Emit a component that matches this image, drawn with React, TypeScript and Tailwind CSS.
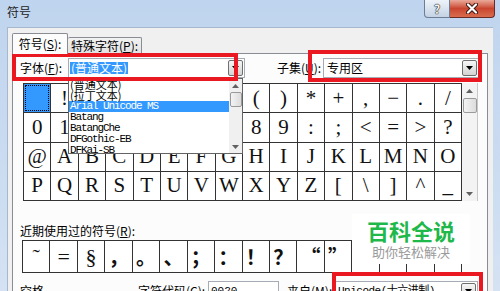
import React from "react";

const row1 = [" ", "!", "", "", "", "", "", "", "(", ")", "*", "+", ",", "−", ".", "/"];
const row2 = ["0", "1", "", "", "", "", "", "", "8", "9", ":", ";", "<", "=", ">", "?"];
const row3 = "@ABCDEFGHIJKLMNO".split("");
const row4 = "PQRSTUVWXYZ[\\]^_".split("");
const rows = [row1, row2, row3, row4];

const recent = ["˜", "=", "§", "，", "。", "、", "；", "：", "！", "？", "“", "”", "", "", "", ""];

function DropBtn() {
  return (
    <div className="ml-auto mr-[1px] flex h-[16px] w-[15px] items-center justify-center rounded-[2px] border border-[#6f6f6f] bg-gradient-to-b from-[#f6f6f6] to-[#d4d4d4]">
      <svg width="7" height="4" viewBox="0 0 7 4">
        <path d="M0 0H7L3.5 4Z" fill="#000" />
      </svg>
    </div>
  );
}

function UpArrow() {
  return (
    <svg width="7" height="4" viewBox="0 0 7 4">
      <path d="M0 4H7L3.5 0Z" fill="#606060" />
    </svg>
  );
}
function DownArrow() {
  return (
    <svg width="7" height="4" viewBox="0 0 7 4">
      <path d="M0 0H7L3.5 4Z" fill="#606060" />
    </svg>
  );
}

function Label({ text, k }: { text: string; k: string }) {
  return (
    <span className="whitespace-nowrap">
      {text}(<span className="underline">{k}</span>):
    </span>
  );
}

export default function App() {
  return (
    <div className="relative h-[291px] w-[500px] overflow-hidden bg-gradient-to-b from-[#bfd4ee] to-[#d4e2f3] font-['Noto_Sans_CJK_SC',sans-serif] text-[12px] leading-[16px] text-black">
      {/* title bar */}
      <div className="flex h-[27px] items-start">
        <div className="pl-[7px] pt-[4px] text-[12px] leading-[16px] text-[#1e1e1e]">符号</div>
        <div className="ml-auto mr-[5px] flex">
          <div className="flex h-[18px] w-[26px] items-center justify-center rounded-bl-[4px] border border-t-0 border-[#6d7d93] bg-gradient-to-b from-[#eef3f9] via-[#d9e3ef] to-[#c3d2e4] text-[12px] font-bold leading-none text-[#f5f5f5] [text-shadow:0_0_1px_#222,0_0_1px_#222,0_0_1px_#222]">
            ?
          </div>
          <div className="flex h-[18px] w-[45px] items-center justify-center rounded-br-[4px] border border-l-0 border-t-0 border-[#6a2a26] bg-gradient-to-b from-[#e9a99b] via-[#c9452f] to-[#d86c4c]">
            <svg width="12" height="11" viewBox="0 0 12 11">
              <path d="M2 1.5L10 9.5M10 1.5L2 9.5" stroke="#3b1410" strokeWidth="4" strokeLinecap="round" />
              <path d="M2 1.5L10 9.5M10 1.5L2 9.5" stroke="#ffffff" strokeWidth="2.2" strokeLinecap="round" />
            </svg>
          </div>
        </div>
      </div>

      {/* client area */}
      <div className="ml-[7px] h-[264px] w-[486px] border-l border-t border-[#a7b8cd] bg-[#f0f0f0] pt-[5px]">
        {/* tabs */}
        <div className="relative z-10 flex h-[20px] items-end pl-[4px]">
          <div className="-mb-px flex h-[21px] w-[56px] items-center justify-center rounded-t-[2px] border border-b-0 border-[#898c95] bg-[#fcfcfc]">
            <Label text="符号" k="S" />
          </div>
          <div className="flex h-[16px] w-[74px] items-center justify-center rounded-t-[2px] border border-b-0 border-l-0 border-[#898c95] bg-gradient-to-b from-[#f2f2f2] to-[#e3e3e3]">
            <Label text="特殊字符" k="P" />
          </div>
        </div>

        {/* panel */}
        <div className="ml-[4px] h-[240px] w-[476px] border border-[#898c95] bg-[#fcfcfc]">
          {/* font row */}
          <div className="mt-[4px] flex h-[20px] items-center">
            <div className="ml-[7px] w-[48px]">
              <Label text="字体" k="F" />
            </div>
            <div className="flex h-[20px] w-[177px] items-center border border-[#a5acb5] bg-white pl-[1px]">
              <span className="bg-[#3399ff] px-[1px] text-[12px] leading-[12px] text-white">(普通文本)</span>
              <DropBtn />
            </div>
            <div className="ml-[32px] w-[46px]">
              <Label text="子集" k="U" />
            </div>
            <div className="flex h-[20px] w-[156px] items-center border border-[#a5acb5] bg-white pl-[3px]">
              <span>专用区</span>
              <DropBtn />
            </div>
          </div>

          {/* symbol grid */}
          <div className="ml-[10px] mt-[5px] flex">
            <div className="grid h-[118px] w-[439px] grid-cols-[repeat(16,minmax(0,1fr))] grid-rows-4 border-l border-t border-[#333] bg-white">
              {rows.map((r, ri) =>
                r.map((c, ci) => (
                  <div
                    key={`${ri}-${ci}`}
                    className={
                      ri === 0 && ci === 0
                        ? "relative border-b border-r border-[#333] bg-[#3399ff]"
                        : "flex items-center justify-center border-b border-r border-[#333] font-['Liberation_Serif',serif] text-[21px] leading-none text-[#111]"
                    }
                  >
                    {ri === 0 && ci === 0 ? (
                      <div className="absolute inset-[1px] border border-dotted border-black" />
                    ) : (
                      c
                    )}
                  </div>
                ))
              )}
            </div>
            <div className="flex h-[118px] w-[16px] flex-col items-center border-r border-[#c8c8c8] bg-[#f3f3f3]">
              <div className="flex h-[15px] items-center">
                <UpArrow />
              </div>
              <div className="h-[15px] w-[14px] rounded-[2px] border border-[#9a9a9a] bg-gradient-to-r from-[#f3f3f3] to-[#dcdcdc]" />
              <div className="mt-auto flex h-[15px] items-center">
                <DownArrow />
              </div>
            </div>
          </div>

          {/* recent label */}
          <div className="ml-[7px] mt-[22px] h-[16px]">
            <Label text="近期使用过的符号" k="R" />
          </div>

          {/* recent row */}
          <div className="ml-[9px] mt-[1px] grid h-[33px] w-[440px] grid-cols-[repeat(16,minmax(0,1fr))] border-l border-t border-[#333] bg-white">
            {recent.map((c, i) => (
              <div
                key={i}
                className={
                  i < 3
                    ? "flex items-center justify-center border-b border-r border-[#333] font-['Liberation_Serif',serif] text-[22px] leading-none text-[#111]"
                    : "flex items-center justify-center border-b border-r border-[#333] font-['Noto_Sans_CJK_SC',sans-serif] text-[20px] font-bold leading-none text-[#111]"
                }
              >
                {c}
              </div>
            ))}
          </div>

          {/* bottom row */}
          <div className="mt-[8px] flex h-[20px] items-center">
            <div className="ml-[7px] w-[118px]">空格</div>
            <div className="w-[70px]">
              <Label text="字符代码" k="C" />
            </div>
            <div className="flex h-[20px] w-[71px] items-center border border-[#a5acb5] bg-white pl-[2px] font-['Liberation_Mono',monospace] text-[11px]">
              0020
            </div>
            <div className="ml-[8px] w-[48px]">
              <Label text="来自" k="M" />
            </div>
            <div className="flex h-[20px] w-[143px] items-center border border-[#a5acb5] bg-white pl-[2px]">
              <span className="font-['Liberation_Mono','Noto_Sans_CJK_SC',monospace] text-[11px] tracking-[-0.5px]">Unicode(十六进制)</span>
              <DropBtn />
            </div>
          </div>
        </div>
      </div>

      {/* dropdown list overlay */}
      <div className="absolute left-[68px] top-[78px] flex h-[76px] w-[175px] border border-[#646464] bg-white">
        <div className="flex-1 overflow-hidden">
          <div className="flex h-[11px] items-center pl-[1px] text-[11px] leading-none">(普通文本)</div>
          <div className="flex h-[11px] items-center pl-[1px] text-[11px] leading-none">(拉丁文本)</div>
          <div className="flex h-[11px] items-center bg-[#3399ff] pl-[1px] font-['Liberation_Mono',monospace] text-[11px] leading-none tracking-[-1.1px] text-white">Arial Unicode MS</div>
          <div className="flex h-[11px] items-center pl-[1px] font-['Liberation_Mono',monospace] text-[11px] leading-none tracking-[-1.1px]">Batang</div>
          <div className="flex h-[11px] items-center pl-[1px] font-['Liberation_Mono',monospace] text-[11px] leading-none tracking-[-1.1px]">BatangChe</div>
          <div className="flex h-[11px] items-center pl-[1px] font-['Liberation_Mono',monospace] text-[11px] leading-none tracking-[-1.1px]">DFGothic-EB</div>
          <div className="flex h-[11px] items-center pl-[1px] font-['Liberation_Mono',monospace] text-[11px] leading-none tracking-[-1.1px]">DFKai-SB</div>
        </div>
        <div className="flex w-[13px] flex-col items-center bg-[#f0f0f0]">
          <div className="flex h-[13px] items-center">
            <UpArrow />
          </div>
          <div className="h-[15px] w-[12px] rounded-[2px] border border-[#9a9a9a] bg-gradient-to-r from-[#f3f3f3] to-[#dcdcdc]" />
          <div className="mt-auto flex h-[12px] items-center">
            <DownArrow />
          </div>
        </div>
      </div>

      {/* watermark */}
      <div className="absolute left-[352px] top-[214px] flex h-[50px] w-[118px] flex-col items-center bg-white pt-[3px]">
        <div className="text-[22px] font-bold leading-[26px] text-[#1fb84b]">百科全说</div>
        <div className="text-[13px] leading-[18px] text-[#9a9a9a]">助你轻松解决</div>
      </div>

      {/* red annotation boxes */}
      <div className="absolute left-[12px] top-[53px] h-[28px] w-[226px] border-4 border-[#ea1820]" />
      <div className="absolute left-[308px] top-[50px] h-[32px] w-[174px] border-4 border-[#ea1820]" />
      <div className="absolute left-[332px] top-[272px] h-[30px] w-[151px] border-4 border-[#ea1820]" />
    </div>
  );
}
